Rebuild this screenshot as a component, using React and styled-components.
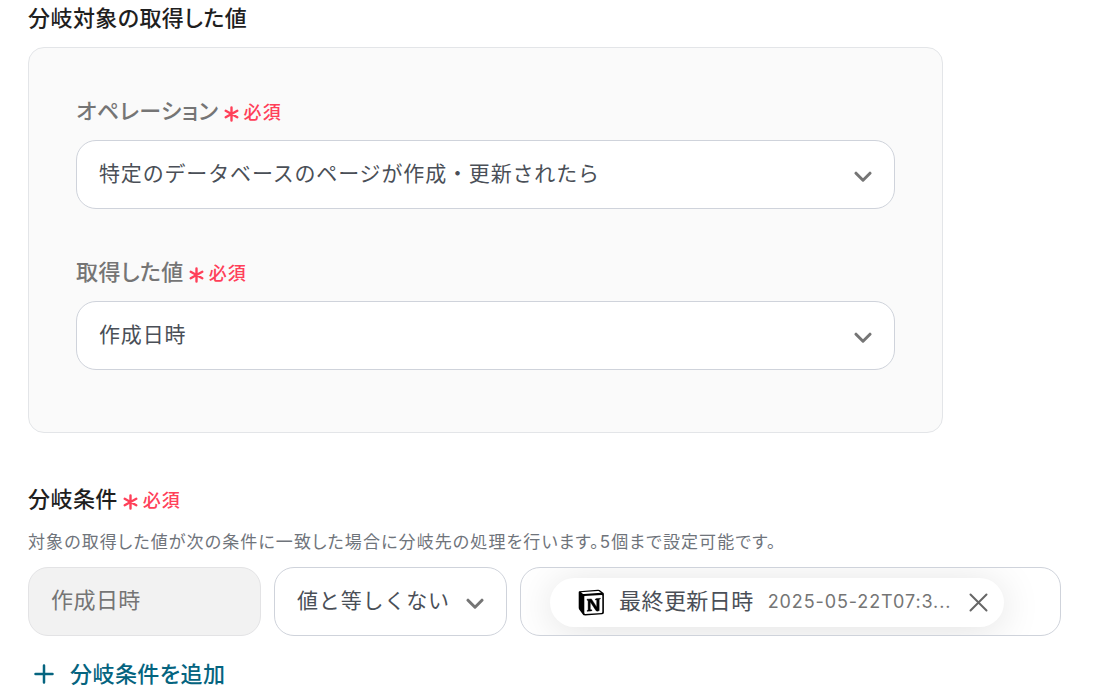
import React from "react";
import styled, { createGlobalStyle } from "styled-components";

const GlobalStyle = createGlobalStyle`
  *, *::before, *::after { box-sizing: border-box; }
  body {
    margin: 0;
    background: #fff;
    color: #1f1f1f;
    font-family: Inter, "Noto Sans CJK JP", sans-serif;
    font-size: 22px;
    line-height: 32px;
    font-feature-settings: "palt";
    letter-spacing: 0.02em;
  }
  button, input, select {
    font: inherit;
    font-feature-settings: inherit;
    letter-spacing: inherit;
    color: inherit;
  }
`;

const Page = styled.main`
  padding: 2px 38px 0 28px;
`;

const Heading = styled.h2`
  margin: 0;
  font-size: 22px;
  line-height: 32px;
  font-weight: 500;
`;

const Panel = styled.section`
  margin: 13px 118px 50px 0;
  padding: 47px 47px 62px;
  border: 1px solid #e3e5e8;
  border-radius: 16px;
  background: #fafafa;
  display: flex;
  flex-direction: column;
  gap: 47px;
`;

const Field = styled.div`
  display: flex;
  flex-direction: column;
  gap: 13px;
`;

const LabelRow = styled.div`
  display: flex;
  align-items: center;
  gap: 5px;
  height: 32px;
`;

const Label = styled.label`
  color: #757575;
  font-weight: 500;
`;

const RequiredMark = styled.span`
  display: inline-flex;
  align-items: center;
  gap: 5px;
  padding-top: 3px;
  color: #ff4059;
  font-size: 18px;
  line-height: 30px;
  letter-spacing: 0.06em;
  font-weight: 500;

  svg { margin-top: 2px; }
`;

const SelectBox = styled.div`
  display: grid;
  align-items: center;

  > * { grid-area: 1 / 1; }
  > svg {
    justify-self: end;
    margin: 4px 22px 0 0;
    pointer-events: none;
  }
`;

const Select = styled.select`
  appearance: none;
  width: 100%;
  height: 69px;
  padding: 0 48px 2px 22px;
  border: 1px solid #cfd3db;
  border-radius: 20px;
  background: #fff;
  color: #4a4f57;
  font-size: 21px;
  letter-spacing: 0.04em;
  font-feature-settings: normal;
`;

const Note = styled.p`
  margin: 11px 0 9px;
  font-size: 17px;
  line-height: 32px;
  letter-spacing: 0.065em;
  color: #6f747b;
`;

const ConditionRow = styled.div`
  display: grid;
  grid-template-columns: 233px 233px minmax(0, 1fr);
  gap: 13px;
`;

const FixedInput = styled.input`
  width: 100%;
  height: 69px;
  padding: 0 22px 7px;
  border: 1px solid #e3e3e5;
  border-radius: 20px;
  background: #f2f2f2;
  color: #757575;
`;

const ValueBox = styled.div`
  height: 69px;
  padding: 2px 29px 0;
  border: 1px solid #cfd3db;
  border-radius: 20px;
  display: flex;
  align-items: center;
  overflow: hidden;
`;

const Chip = styled.div`
  height: 49px;
  padding: 0 12px 0 28px;
  border-radius: 25px;
  background: #fff;
  box-shadow: 0 4px 40px rgba(0, 0, 0, 0.12);
  display: flex;
  align-items: center;
  gap: 14px;
  white-space: nowrap;
`;

const ChipName = styled.span`
  padding-bottom: 4px;
  color: #4a4f57;
`;

const ChipValue = styled.span`
  padding-bottom: 2px;
  color: #757575;
  font-size: 18px;
  letter-spacing: 0.05em;
`;

const CloseButton = styled.button`
  display: flex;
  padding: 4px;
  border: 0;
  background: none;
  color: #666;
`;

const AddButton = styled.button`
  display: flex;
  align-items: center;
  gap: 16px;
  margin-top: 22px;
  padding: 0 6px;
  border: 0;
  background: none;
  color: #05647f;
  font-weight: 500;
`;

function Chevron() {
  return (
    <svg width="19" height="12" viewBox="0 0 19 12" fill="none" stroke="#757575" strokeWidth="3" strokeLinecap="round" strokeLinejoin="round" aria-hidden="true">
      <path d="M2 2.2 9 9.2l7-7" />
    </svg>
  );
}

function Required() {
  return (
    <RequiredMark>
      <svg width="15" height="16" viewBox="0 0 15 16" fill="none" stroke="currentColor" strokeWidth="2.4" strokeLinecap="round" aria-hidden="true">
        <path d="M7.5 1.5v13M1.7 4.8l11.6 6.4M1.7 11.2l11.6-6.4" />
      </svg>
      必須
    </RequiredMark>
  );
}

function NotionLogo() {
  return (
    <svg width="27" height="27" viewBox="0 0 27 27" aria-hidden="true">
      <path d="M1.2 2.3 19.8.8c1 0 1.7.1 2.4.7l3 2.3c.6.4.7.8.7 1.7v17.8c0 1.3-.5 1.9-1.8 2L6.9 26.4c-.9 0-1.5-.2-2-.9l-3.7-5C.8 19.900.7 19.3.7 18.500V3.600c0-.7.1-1.200.5-1.300Z" fill="#000" />
      <path d="m3 3.300 16.800-1.200c.7 0 1 .1 1.500.5l1.700 1.200L6 5c-.7 0-1.100-.1-1.600-.5Z" fill="#fff" />
      <path d="m6.600 6.900 17-1c.5 0 .7.2.7.7v16.500c0 .5-.2.8-.7.8l-16.500 1c-.6 0-.8-.3-.8-.8V7.500c0-.4 0-.6.3-.6Z" fill="#fff" />
      <path d="m9 10.200 4.400-.3 5.300 8v-6.800l-1.500-.2c0-.9.600-1.300 1.300-1.400l3.900-.2v.6l-1.200.5v11.200c-1.800.9-2.800.7-3.500-.4l-5.400-8.300v7.600l1.700.4c0 1-.7 1.100-1.200 1.200L9 22.300v-.7l1.100-.4V11.500L9 11.200Z" fill="#000" stroke="#000" strokeWidth="0.4" />
    </svg>
  );
}

export default function App() {
  return (
    <>
      <GlobalStyle />
      <Page lang="ja">
        <Heading>分岐対象の取得した値</Heading>
        <Panel>
          <Field>
            <LabelRow>
              <Label htmlFor="operation">オペレーション</Label>
              <Required />
            </LabelRow>
            <SelectBox>
              <Select id="operation">
                <option>特定のデータベースのページが作成・更新されたら</option>
              </Select>
              <Chevron />
            </SelectBox>
          </Field>
          <Field>
            <LabelRow>
              <Label htmlFor="acquired">取得した値</Label>
              <Required />
            </LabelRow>
            <SelectBox>
              <Select id="acquired">
                <option>作成日時</option>
              </Select>
              <Chevron />
            </SelectBox>
          </Field>
        </Panel>
        <LabelRow>
          <Heading>分岐条件</Heading>
          <Required />
        </LabelRow>
        <Note>対象の取得した値が次の条件に一致した場合に分岐先の処理を行います。5個まで設定可能です。</Note>
        <ConditionRow>
          <FixedInput aria-label="取得した値" value="作成日時" disabled />
          <SelectBox>
            <Select aria-label="条件">
              <option>値と等しくない</option>
            </Select>
            <Chevron />
          </SelectBox>
          <ValueBox>
            <Chip>
              <NotionLogo />
              <ChipName>最終更新日時</ChipName>
              <ChipValue>2025-05-22T07:3...</ChipValue>
              <CloseButton type="button" aria-label="削除">
                <svg width="19" height="19" viewBox="0 0 19 19" fill="none" stroke="currentColor" strokeWidth="2" strokeLinecap="round" aria-hidden="true">
                  <path d="m1.500 1.500 16 16M17.500 1.500l-16 16" />
                </svg>
              </CloseButton>
            </Chip>
          </ValueBox>
        </ConditionRow>
        <AddButton type="button">
          <svg width="20" height="20" viewBox="0 0 20 20" fill="none" stroke="currentColor" strokeWidth="2.500" strokeLinecap="round" aria-hidden="true">
            <path d="M10 1.500v17M1.500 10h17" />
          </svg>
          分岐条件を追加
        </AddButton>
      </Page>
    </>
  );
}
